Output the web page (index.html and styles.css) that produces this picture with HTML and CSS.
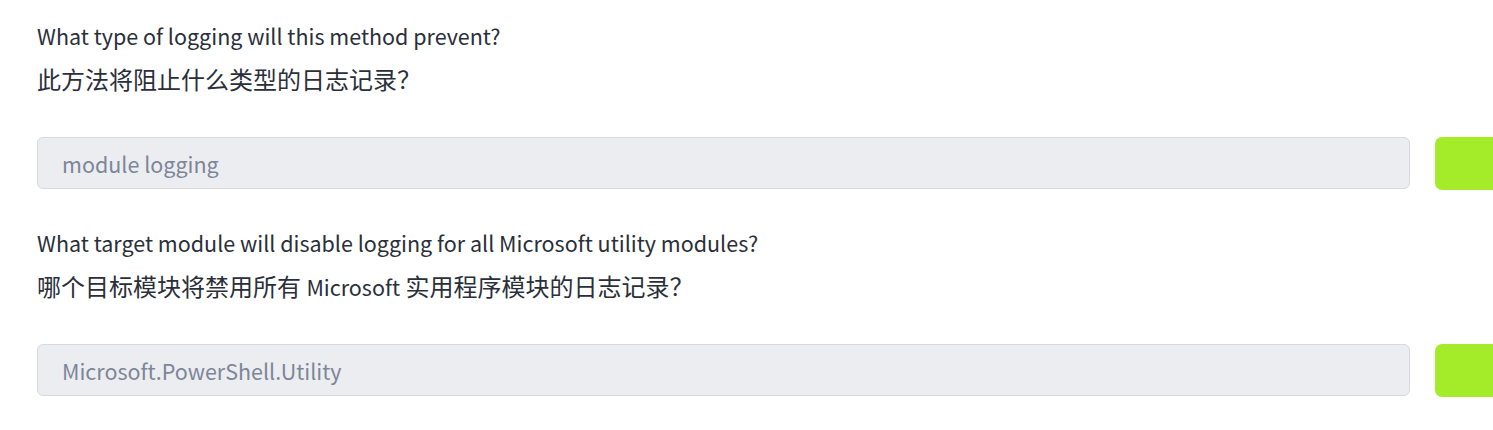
FILE: index.html
```html
<!DOCTYPE html>
<html>
<head>
<meta charset="utf-8">
<link rel="stylesheet" href="styles.css">
</head>
<body>
<div class="page">
  <section class="task">
    <p class="q-en">What type of logging will this method prevent?</p>
    <p class="q-zh">此方法将阻止什么类型的日志记录？</p>
    <div class="answer-row">
      <div class="answer">module logging</div>
      <div class="submit"></div>
    </div>
  </section>
  <section class="task">
    <p class="q-en">What target module will disable logging for all Microsoft utility modules?</p>
    <p class="q-zh">哪个目标模块将禁用所有 <span class="latin">Microsoft</span> 实用程序模块的日志记录？</p>
    <div class="answer-row">
      <div class="answer">Microsoft.PowerShell.Utility</div>
      <div class="submit"></div>
    </div>
  </section>
</div>
</body>
</html>
```

FILE: styles.css
```css
html, body {
  margin: 0;
  padding: 0;
  background: #ffffff;
  overflow: hidden;
}
.page {
  padding: 21px 0 0 37px;
  font-family: "Noto Sans CJK SC", sans-serif;
  color: #2a2f3a;
}
.task {
  margin-bottom: 38px;
}
.q-en {
  margin: 0;
  font-size: 21.5px;
  line-height: 30px;
}
.q-zh {
  margin: 13px 0 0 0;
  font-size: 24px;
  line-height: 30px;
  height: 30px;
}
.q-zh .latin {
  font-size: 21.5px;
  line-height: 0;
}
.answer-row {
  margin-top: 43px;
  display: grid;
  grid-template-columns: 1373px 100px;
  column-gap: 25px;
}
.answer {
  box-sizing: border-box;
  height: 52px;
  background: #ecedf1;
  border: 1px solid #d6d9df;
  border-radius: 6px;
  padding: 0 24px;
  display: flex;
  align-items: center;
  font-size: 21.5px;
  color: #7d8698;
}
.submit {
  height: 53px;
  background: #a4eb2a;
  border-radius: 7px;
}
```
